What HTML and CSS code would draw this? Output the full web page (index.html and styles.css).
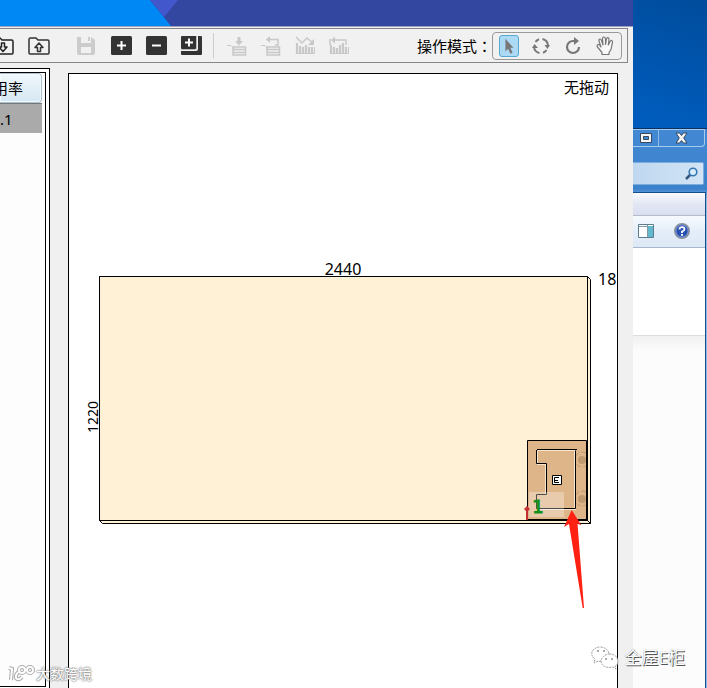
FILE: index.html
```html
<!DOCTYPE html>
<html lang="zh-CN">
<head>
	<title>排版</title>
	<meta charset="utf-8">
	<meta name="viewport" content="width=device-width, initial-scale=1.0">
	<link rel="stylesheet" href="styles.css">
</head>
<body>

<div class="app">
	<div class="titlebar">
		<svg width="180" height="26" viewBox="0 0 180 26">
			<path fill="#0088f4" d="M0 0h150l21 26H0z"/>
			<path fill="#4257cc" d="M150 0h28l-14 17z"/>
		</svg>
	</div>

	<div class="toolbar">
		<div class="group group-file">
			<button type="button" aria-label="导入">
				<svg width="22" height="18" viewBox="0 0 22 18" fill="none" stroke="#222" stroke-width="1.5" stroke-linejoin="round"><path d="M1 16V2.500Q1 1 2.500 1H8l2 2h9.500Q21 3 21 4.500V16Q21 17 20 17H2Q1 17 1 16z"/><path d="M9.500 6h3v4H15l-4 4.500L7 10h2.500z"/></svg>
			</button>
			<button type="button" aria-label="导出">
				<svg width="22" height="18" viewBox="0 0 22 18" fill="none" stroke="#333" stroke-width="1.5" stroke-linejoin="round"><path d="M1 16V2.500Q1 1 2.500 1H8l2 2h9.500Q21 3 21 4.500V16Q21 17 20 17H2Q1 17 1 16z"/><path d="M9.500 14.500h3v-4H15L11 6l-4 4.500h2.500z"/></svg>
			</button>
		</div>
		<div class="group group-edit">
			<button type="button" aria-label="保存" disabled>
				<svg width="20" height="20" viewBox="0 0 20 20"><path fill="#ccc" fill-rule="evenodd" d="M1 2q0-1 1-1h3v6h10V1l4 3v13q0 2-2 2H3q-2 0-2-2zm4 9v6h10v-6z"/><path fill="#ccc" d="M12 1h2v4h-2z"/></svg>
			</button>
			<button type="button" aria-label="增加">
				<svg width="21" height="19" viewBox="0 0 21 19"><rect width="21" height="19" rx="1.500" fill="#333"/><path stroke="#fff" stroke-width="2" d="M6 9.500h9M10.500 5v9"/></svg>
			</button>
			<button type="button" aria-label="减少">
				<svg width="21" height="19" viewBox="0 0 21 19"><rect width="21" height="19" rx="1.500" fill="#333"/><path stroke="#fff" stroke-width="2" d="M6 9.500h9"/></svg>
			</button>
			<button type="button" aria-label="复制">
				<svg width="21" height="19" viewBox="0 0 21 19"><path fill="#333" d="M1 0h14v13H1q-1 0-1-1V1q0-1 1-1zM17 0h3q1 0 1 1v17q0 1-1 1H1q-1 0-1-1v-3h15q2 0 2-2z"/><path stroke="#fff" stroke-width="2" d="M4 6.500h8M8 2.500v8"/><path fill="none" stroke="#bbb" d="M15.500 0v12q0 1.500-1.500 1.500H0"/></svg>
			</button>
		</div>
		<div class="separator"></div>
		<div class="group">
			<button type="button" aria-label="插入行" disabled>
				<svg width="20" height="20" viewBox="0 0 20 20" fill="none" stroke="#c8c8c8"><path stroke-width="3" d="M12 1v5"/><path fill="#c8c8c8" stroke="none" d="M8 5h8l-4 4.500z"/><path d="M0 9.500h4l3 3"/><path stroke-width="1.500" d="M6 11h12.500v8H6zM6 13.500h12.500M6 16.500h12.500"/></svg>
			</button>
			<button type="button" aria-label="退回行" disabled>
				<svg width="20" height="20" viewBox="0 0 20 20" fill="none" stroke="#c8c8c8"><path stroke-width="1.500" d="M8 3.500h9V9h-3"/><path fill="#c8c8c8" stroke="none" d="M5 3.500L9 0v7z"/><path d="M0 9.500h4l3 3"/><path stroke-width="1.500" d="M6 11h12.500v8H6zM6 13.500h12.500M6 16.500h12.500"/></svg>
			</button>
			<button type="button" aria-label="统计" disabled>
				<svg width="20" height="20" viewBox="0 0 20 20" fill="none" stroke="#c8c8c8"><path stroke-width="1.500" d="M1 1l6 6 5-5 6 5"/><path fill="#c8c8c8" stroke="none" d="M19 3v6h-6z"/><path stroke-width="2.200" d="M2 7v11M5 10v8M8 11v7M11 9v9M14 11v7M17 11v7"/><path d="M1 17.500h18.500V11"/></svg>
			</button>
			<button type="button" aria-label="撤销统计" disabled>
				<svg width="20" height="20" viewBox="0 0 20 20" fill="none" stroke="#c8c8c8"><path stroke-width="1.500" d="M5 4h12v5M1 3v6"/><path fill="#c8c8c8" stroke="none" d="M2 4l4-3.500v7z"/><path stroke-width="2.200" d="M2 9v9M5 11v7M8 12v6M11 9v9M14 7v11M17 11v7"/><path d="M1 17.500h18.500V11"/></svg>
			</button>
		</div>

		<span class="mode-label" id="mode-label">操作模式<span lang="zh-TW">：</span></span>
		<div class="modes" role="group" aria-labelledby="mode-label">
			<button type="button" class="active" aria-label="选择" aria-pressed="true">
				<svg width="20" height="22" viewBox="0 0 20 22"><path fill="#777" d="M6 3v14l3-3 2.500 5.500 2.500-1L11.500 13H15z"/></svg>
			</button>
			<button type="button" aria-label="翻转">
				<svg width="18" height="18" viewBox="0 0 18 18" fill="none" stroke="#777" stroke-width="2"><path d="M3.500 5A7 7 0 0 1 7 2.200M10.500 2a7 7 0 0 1 5.400 6M14.500 13a7 7 0 0 1-3.500 2.700M7.500 16A7 7 0 0 1 2 10"/><path fill="#777" stroke="none" d="M12.500 8H18l-2.500 4zM0 11l2.500-4L6 11z"/></svg>
			</button>
			<button type="button" aria-label="旋转">
				<svg width="18" height="18" viewBox="0 0 18 18" fill="none" stroke="#777" stroke-width="2.200"><path d="M11.500 4H9a6 6 0 1 0 6 6"/><path fill="#777" stroke="none" d="M10 0l5 4-5 4z"/></svg>
			</button>
			<button type="button" aria-label="平移">
				<svg width="18" height="20" viewBox="0 0 18 20" fill="#f8f8f8" stroke="#777" stroke-width="1.200" stroke-linejoin="round"><path d="M6 18.500v-2L1.500 11q-1-2 .5-2.500Q3 8 5 11L3 5Q2.600 3 4 3q1 0 1.500 1.500L7 9 6.500 3q0-2 1.300-2T9.500 3v5.500L10.500 3q.3-1.500 1.500-1.300T13 4l-.7 5L14 5.500q1-1.500 2-.8t.3 2.500L15 13.500l-2 3v2z"/></svg>
			</button>
		</div>
	</div>

	<div class="content">
		<div class="side">
			<div class="side-inner">
				<table>
					<tr><th>用率</th></tr>
					<tr><td>.1</td></tr>
				</table>
			</div>
		</div>

		<div class="board">
			<span class="drag-state">无拖动</span>
			<svg class="drawing" viewBox="69 74 548 614">
				<!-- sheet and its thickness -->
				<path fill="#fff1d6" stroke="#000" d="M99.500 276.500h488l3 3v244h-488l-3-3z"/>
				<path fill="#fff1d6" stroke="#000" d="M99.500 276.500h488v244h-488z"/>
				<path stroke="#000" d="M587.500 520.500l3 3"/>
				<text x="343" y="275" text-anchor="middle">2440</text>
				<text x="598" y="285">18</text>
				<text class="side-size" transform="translate(98 417) rotate(-90)" text-anchor="middle">1220</text>

				<!-- part -->
				<path fill="#deb588" stroke="#000" d="M527.500 440.500h59v79h-59z"/>
				<path fill="none" stroke="#000" stroke-width="2" d="M587 441v79h-60"/>
				<g fill="none" stroke="#bd9970" stroke-dasharray="5 2">
					<path d="M586 453a7.500 7.500 0 1 0 0 13M586 492a7.500 7.500 0 1 0 0 13"/>
				</g>
				<circle cx="582" cy="460" r="4" fill="#bf9970"/>
				<circle cx="582" cy="499" r="4" fill="#bf9970"/>
				<path fill="none" stroke="#f7e5cd" d="M538 450.500h37M537.500 451v12M537 464.500h9M574.500 451v57M545.500 465v29M537 509.500h39"/>
				<path fill="none" stroke="#000" d="M537 449.500h40M536.500 450v13.500h10v31h-10v14h39v-58"/>
				<path fill="#fff" fill-opacity=".3" d="M529 492h35v25h-35z"/>
				<path fill="#fff" stroke="#000" d="M552.500 475.500h9v9h-9z"/>
				<path fill="none" stroke="#000" d="M559 477.500h-4.500v5h4.500M554 480.500h4"/>
				<text class="part-no" x="538" y="513" text-anchor="middle">1</text>
				<path stroke="#c03030" stroke-width="2" d="M527 509v11"/>
				<path fill="#c83232" d="M527 506l3 3-3 3-3-3z"/>

				<path fill="#ff2213" d="M571.700 510l9.800 15.500-4-2 6.500 84.500h-1.300L569 524l-5 3z"/>
			</svg>
		</div>
	</div>
</div>

<div class="desktop">
	<div class="window">
		<div class="window-controls">
			<button type="button" class="maximize" aria-label="最大化">
				<svg width="12" height="10" viewBox="0 0 12 10"><path fill="#f5f5f5" stroke="#36485f" d="M.5.500h11v9H.500zM3.500 3.500v3h5v-3z" fill-rule="evenodd"/></svg>
			</button>
			<button type="button" class="close" aria-label="关闭">
				<svg width="13" height="12" viewBox="0 0 13 12"><path fill="#f5f5f5" stroke="#36485f" d="M1 1h3.500l2 2.500 2-2.500H12L8.700 6l3.300 5H8.500l-2-2.500-2 2.500H1l3.300-5z"/></svg>
			</button>
		</div>
		<div class="search">
			<input type="text" aria-label="搜索">
			<svg width="13" height="13" viewBox="0 0 13 13" fill="none"><path stroke="#35567f" stroke-width="2.500" d="M1 12l4.500-4.500"/><circle cx="8" cy="5" r="3.800" fill="#d8ecfa" stroke="#3578b0" stroke-width="1.600"/></svg>
		</div>
		<div class="window-body">
			<div class="menu-strip"></div>
			<div class="command-bar">
				<button type="button" aria-label="预览窗格">
					<svg width="16" height="14" viewBox="0 0 16 14"><path fill="#fff" stroke="#5b7c8c" d="M.5.500h15v13H.500z"/><path stroke="#8499a8" d="M1 2.500h9M9.500 1v12"/><path fill="#62b8cc" d="M10 2h5v11h-5z"/></svg>
				</button>
				<button type="button" aria-label="帮助">
					<svg width="16" height="16" viewBox="0 0 16 16"><circle cx="8" cy="8" r="7.200" fill="#2850b0" stroke="#8b91a0" stroke-width="1.600"/><circle cx="8" cy="8" r="6" fill="none" stroke="#9db8e8" stroke-width=".6"/><path fill="none" stroke="#fff" stroke-width="1.800" d="M5.500 6.500Q5.500 4.200 8 4.200t2.500 2Q10.500 7.500 8 8.500V10"/><path fill="#fff" d="M7 11h2v1.800H7z"/></svg>
				</button>
			</div>
			<div class="pane"></div>
			<div class="details"></div>
		</div>
	</div>
</div>

<div class="mark mark-left">
	<svg width="28" height="18" viewBox="0 0 28 18" fill="none"><g stroke="#aaa" stroke-width="4"><path d="M1 3l3 1-1 11M12 6q-5 3-4 7 2 3 6-1"/><circle cx="14" cy="5" r="3"/><circle cx="22" cy="5" r="3"/></g><g stroke="#fff" stroke-width="2"><path d="M1 3l3 1-1 11M12 6q-5 3-4 7 2 3 6-1"/><circle cx="14" cy="5" r="3"/><circle cx="22" cy="5" r="3"/></g></svg>
	<span>大数跨境</span>
</div>
<div class="mark mark-right">
	<svg width="28" height="26" viewBox="0 0 28 26" fill="#fff" stroke="#999" stroke-dasharray="2 1"><path d="M10 16q-2 1-3 0l-4 2 1-4Q0 11 1 7q2-5 9-5 7 1 8 7"/><path d="M18 9q8 0 9 7 0 4-3 5l1 3-3-2q-11 2-12-6 1-6 8-7z"/><path stroke-dasharray="none" stroke="#555" d="M6 6h2M12 6h2M14 14h2M20 14h2"/></svg>
	<span>全屋E柜</span>
</div>

</body>
</html>
```
FILE: styles.css
```css
* {
	box-sizing: border-box;
}
body {
	position: relative;
	display: flex;
	height: 100vh;
	margin: 0;
	overflow: hidden;
	font: 15px/20px "Noto Sans", "Noto Sans CJK SC", sans-serif;
	color: #000;
}
button {
	display: flex;
	align-items: center;
	justify-content: center;
	padding: 0;
	border: 0;
	background: none;
}
svg {
	display: block;
	flex: none;
}

/* main program */
.app {
	flex: 1;
	display: flex;
	flex-direction: column;
	min-width: 0;
	overflow: hidden;
	background: #f0f0f0;
}
.titlebar {
	flex: none;
	height: 27px;
	background: #3346a0;
	border-bottom: 1px solid #9ea1bc;
}
.toolbar {
	flex: none;
	display: flex;
	align-items: center;
	height: 35px;
	margin: 1px 5px 0 0;
	border: 1px solid #858585;
	border-left: 0;
	background: #f1f1f1;
}
.group {
	display: flex;
}
.group button {
	width: 34px;
	height: 28px;
}
.group-file {
	gap: 2px;
	margin: 0 13px 0 -14px;
}
.group-edit {
	gap: 1px;
}
.separator {
	width: 1px;
	height: 25px;
	margin: 0 6px 0 5px;
	background: #ccc;
}
.mode-label {
	margin-left: auto;
	white-space: nowrap;
}
.mode-label span {
	font-family: "Noto Sans CJK TC", sans-serif;
	line-height: 1;
}
.modes {
	display: flex;
	margin-right: 5px;
	border: 1px solid #999;
	border-radius: 4px;
}
.modes button {
	width: 32px;
	height: 26px;
}
.modes .active svg {
	border: 1px solid #55a9cf;
	border-radius: 3px;
	background: #acdaf5;
}

.content {
	flex: 1;
	display: flex;
	min-height: 0;
}
.side {
	flex: none;
	width: 50px;
	margin-top: 5px;
	padding: 3px 3px 1px 0;
	border: solid #000;
	border-width: 1px 1px 0 0;
	background: #fff;
}
.side-inner {
	height: 100%;
	padding-right: 3px;
	border: solid #000;
	border-width: 1px 1px 1px 0;
	background: #fdfdfd;
	overflow: hidden;
}
.side table {
	width: 100%;
	border-collapse: separate;
	border-spacing: 0;
}
.side th,
.side td {
	height: 30px;
	padding: 0;
	font-weight: normal;
	text-align: left;
	white-space: nowrap;
}
.side th {
	display: flex;
	align-items: center;
	text-indent: -7px;
	border: 1px solid #a9c2d3;
	border-left: 0;
	border-radius: 0 4px 4px 0;
	box-shadow: inset 0 0 0 1px #f4fafd;
	background: linear-gradient(#eff7fb, #d5e8f3);
}
.side td {
	border-top: 1px solid #777;
	background: #aaa;
}
.board {
	position: relative;
	flex: 1;
	min-width: 0;
	margin: 10px 15px 0 18px;
	border: 1px solid #000;
	border-bottom: 0;
	background: #fff;
	overflow: hidden;
}
.drag-state {
	position: absolute;
	top: 3px;
	right: 8px;
}
.drawing {
	width: 100%;
}
.drawing text {
	font-size: 16px;
}
.drawing .side-size {
	font-size: 14px;
}
.drawing .part-no {
	font-family: "DejaVu Sans", sans-serif;
	font-size: 18px;
	fill: #109018;
	stroke: #109018;
	stroke-width: 1px;
}

/* desktop with the file window */
.desktop {
	flex: none;
	display: flex;
	width: 74px;
	padding-top: 128px;
	background: linear-gradient(200deg, #004c9c, #005cbc 130px);
}
.window {
	flex: 1;
	display: flex;
	flex-direction: column;
	min-width: 0;
	padding-right: 1px;
	border-top: 1px solid #0a3364;
	background: linear-gradient(#4388d2, #3b82cd 60px, #8bbcea 70px);
}
.window-controls {
	display: flex;
	height: 18px;
	margin-right: 1px;
	border: 1px solid #a5caee;
	border-left: 0;
	border-radius: 0 0 4px 0;
}
.window-controls .maximize {
	width: 26px;
	border-right: 1px solid #92b9e2;
}
.window-controls .close {
	flex: 1;
}
.search {
	display: flex;
	align-items: center;
	height: 23px;
	margin: 15px 2px 7px 0;
	padding-right: 5px;
	border: 1px solid #7daddc;
	border-left: 0;
	border-radius: 0 2px 2px 0;
	background: linear-gradient(90deg, #bfd8f0, #d2e4f5);
}
.search input {
	flex: 1;
	min-width: 0;
	height: 100%;
	padding: 0;
	border: 0;
	background: none;
}
.window-body {
	flex: 1;
	display: flex;
	flex-direction: column;
	border: 1px solid #164f88;
	border-left: 0;
	border-bottom: 0;
	background: #fcfcfc;
}
.menu-strip {
	height: 23px;
	background: linear-gradient(#fafbfe, #e3e7f5 50%, #d9deef);
	border-bottom: 1px solid #b4bccb;
}
.command-bar {
	display: flex;
	align-items: center;
	gap: 20px;
	height: 32px;
	padding: 0 0 1px 5px;
	border-bottom: 1px solid #a6b8cb;
	background: linear-gradient(#f6fafe, #e4eef9 50%, #dce8f5);
}
.pane {
	height: 87px;
	background: #fff;
}
.details {
	height: 16px;
	border-top: 1px solid #ddd;
	background: linear-gradient(#f0f0f0, #fcfcfc);
}

/* marks over the page */
.mark {
	position: absolute;
	display: flex;
	align-items: center;
	color: #fff;
	pointer-events: none;
}
.mark-left {
	left: 8px;
	bottom: 4px;
	font-size: 14px;
	text-shadow: 0 0 2px #888, 0 0 2px #888, 0 0 1px #999;
}
.mark-right {
	right: 22px;
	bottom: 17px;
	gap: 6px;
	font-size: 17px;
	text-shadow: 1px 1px 0 #555, 0 0 1px #777;
}
```
